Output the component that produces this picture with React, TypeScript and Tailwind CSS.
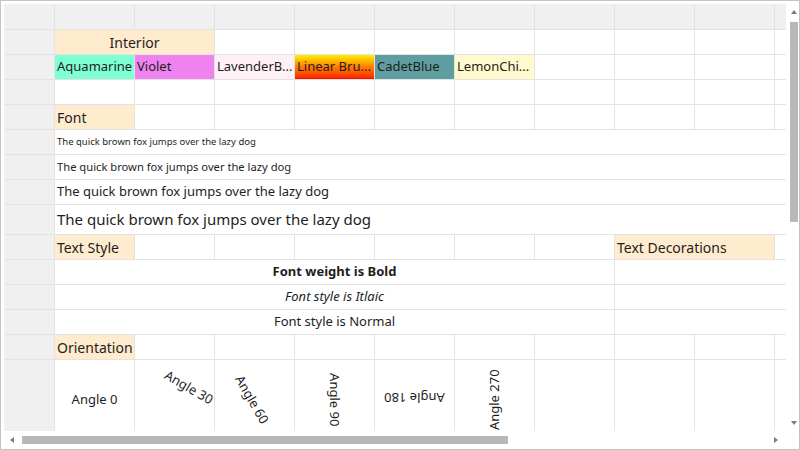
import React from 'react';

const line = 'border-r border-b border-[#e3e3e3]';
const head = `${line} bg-[#f0f0f0]`;
const cell = `${line} overflow-hidden flex items-center px-[2px] whitespace-nowrap`;
const almond = 'bg-[#ffebcd]';

function Empty({ n }: { n: number }) {
  return (
    <>
      {Array.from({ length: n }).map((_, i) => (
        <div key={i} className={line} />
      ))}
    </>
  );
}

function RowHead() {
  return <div className={head} />;
}

function Tri({ dir }: { dir: 'up' | 'down' | 'left' | 'right' }) {
  const pts: Record<string, string> = {
    up: '0,4 3,0 6,4',
    down: '0,0 6,0 3,4',
    left: '4,0 4,6 0,3',
    right: '0,0 4,3 0,6',
  };
  const wide = dir === 'up' || dir === 'down';
  return (
    <svg width={wide ? 6 : 4} height={wide ? 4 : 6} viewBox={wide ? '0 0 6 4' : '0 0 4 6'}>
      <polygon points={pts[dir]} fill="#7b7b7b" />
    </svg>
  );
}

export default function App() {
  const colors = [
    { label: 'Aquamarine', cls: 'bg-[#7fffd4]' },
    { label: 'Violet', cls: 'bg-[#ee82ee]' },
    { label: 'LavenderB...', cls: 'bg-[#fff0f5]' },
    { label: 'Linear Bru...', cls: 'bg-linear-to-b from-[#fff000] via-[#ff7a00] to-[#ff0000]' },
    { label: 'CadetBlue', cls: 'bg-[#5f9ea0]' },
    { label: 'LemonChi...', cls: 'bg-[#fffacd]' },
  ];

  const fox = 'The quick brown fox jumps over the lazy dog';

  return (
    <div
      className="w-[800px] h-[450px] border border-[#c4c4c4] pl-[3px] pt-[3px] flex flex-col bg-white text-[#1e1e1e] text-[13px]"
      style={{ fontFamily: '"Noto Sans", "Open Sans", sans-serif' }}
    >
      <div className="flex h-[427px]">
        {/* sheet */}
        <div className="w-[782px] h-[427px] overflow-hidden">
          <div className="grid grid-cols-[51px_repeat(10,80px)] grid-rows-[26px_repeat(7,25px)_30px_repeat(5,25px)_80px] w-[851px]">
            {/* column header row */}
            {Array.from({ length: 11 }).map((_, i) => (
              <div key={i} className={head} />
            ))}

            {/* Interior */}
            <RowHead />
            <div className={`${cell} ${almond} col-span-2 justify-center text-[14px]`}>Interior</div>
            <Empty n={8} />

            {/* colours */}
            <RowHead />
            {colors.map((c) => (
              <div key={c.label} className={`${cell} ${c.cls}`}>
                {c.label}
              </div>
            ))}
            <Empty n={4} />

            <RowHead />
            <Empty n={10} />

            {/* Font */}
            <RowHead />
            <div className={`${cell} ${almond} text-[14px]`}>Font</div>
            <Empty n={9} />

            <RowHead />
            <div className={`${cell} col-span-10 text-[9.5px]`}>{fox}</div>
            <RowHead />
            <div className={`${cell} col-span-10 text-[11.2px]`}>{fox}</div>
            <RowHead />
            <div className={`${cell} col-span-10 text-[13px]`}>{fox}</div>
            <RowHead />
            <div className={`${cell} col-span-10 text-[15px]`}>{fox}</div>

            {/* Text style */}
            <RowHead />
            <div className={`${cell} ${almond} text-[14px]`}>Text Style</div>
            <Empty n={6} />
            <div className={`${cell} ${almond} col-span-2 text-[14px]`}>Text Decorations</div>
            <Empty n={1} />

            <RowHead />
            <div className={`${cell} col-span-7 justify-center font-bold`}>Font weight is Bold</div>
            <div className={`${line} col-span-3`} />
            <RowHead />
            <div className={`${cell} col-span-7 justify-center italic`}>Font style is Itlaic</div>
            <div className={`${line} col-span-3`} />
            <RowHead />
            <div className={`${cell} col-span-7 justify-center`}>Font style is Normal</div>
            <div className={`${line} col-span-3`} />

            {/* Orientation */}
            <RowHead />
            <div className={`${cell} ${almond} text-[14px]`}>Orientation</div>
            <Empty n={9} />

            <RowHead />
            <div className={`${cell} justify-center`}>Angle 0</div>
            <div className={`${cell} justify-center`}>
              <span className="inline-block translate-x-[14px] -translate-y-[12px] rotate-[30deg]">Angle 30</span>
            </div>
            <div className={`${cell} justify-center`}>
              <span className="inline-block -translate-x-[3px] rotate-[60deg]">Angle 60</span>
            </div>
            <div className={`${cell} justify-center`}>
              <span className="inline-block rotate-90">Angle 90</span>
            </div>
            <div className={`${cell} justify-center`}>
              <span className="inline-block -translate-y-[3px] rotate-180">Angle 180</span>
            </div>
            <div className={`${cell} justify-center`}>
              <span className="inline-block -rotate-90">Angle 270</span>
            </div>
            <Empty n={4} />
          </div>
        </div>

        {/* vertical scrollbar */}
        <div className="w-[13px] flex flex-col pl-[4px]">
          <div className="w-[8px] h-[16px] flex items-center justify-center">
            <Tri dir="up" />
          </div>
          <div className="w-[8px] h-[200px] mt-[2px] bg-[#b8b8b8]" />
          <div className="flex-1" />
          <div className="w-[8px] h-[16px] flex items-center justify-center">
            <Tri dir="down" />
          </div>
        </div>
      </div>

      {/* horizontal scrollbar */}
      <div className="flex h-[18px]">
        <div className="w-[782px] flex items-center">
          <div className="w-[16px] h-[8px] flex items-center justify-center">
            <Tri dir="left" />
          </div>
          <div className="w-[486px] h-[8px] ml-[2px] bg-[#b8b8b8]" />
          <div className="flex-1" />
          <div className="w-[16px] h-[8px] flex items-center justify-center mr-[2px]">
            <Tri dir="right" />
          </div>
        </div>
        <div className="flex-1" />
      </div>
    </div>
  );
}
